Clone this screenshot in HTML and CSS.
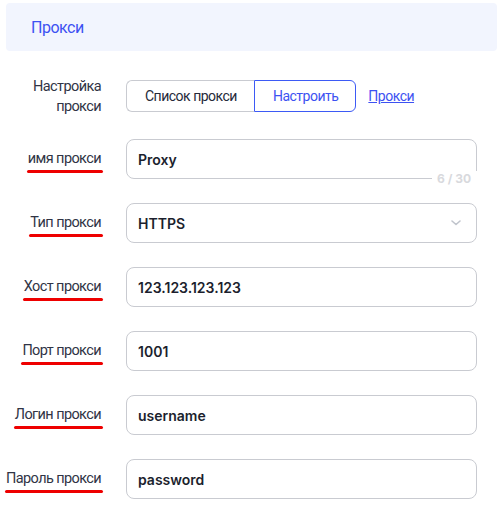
FILE: index.html
```html
<!DOCTYPE html>
<html>
    <head>
        <meta charset="utf-8">
        <title>Прокси</title>
        <link rel="stylesheet" href="styles.css">
    </head>
    <body>
        <div class="panel">
            <div class="header">Прокси</div>
            <div class="form">
                <div class="row">
                    <div class="label two-line">Настройка<br>прокси</div>
                    <div class="control">
                        <div class="seg">
                            <span class="seg-btn">Список прокси</span>
                            <span class="seg-btn active">Настроить</span>
                        </div>
                        <a class="link" href="#">Прокси</a>
                    </div>
                </div>
                <div class="row">
                    <div class="label"><span class="mark">имя прокси</span></div>
                    <div class="field">
                        Proxy
                        <span class="counter">6 / 30</span>
                    </div>
                </div>
                <div class="row">
                    <div class="label"><span class="mark">Тип прокси</span></div>
                    <div class="field select">
                        HTTPS
                        <svg class="chevron" width="10" height="6" viewBox="0 0 10 6">
                            <path d="M1 1 L5 4.5 L9 1" fill="none" stroke="#c0c4cc" stroke-width="1.6" stroke-linecap="round" stroke-linejoin="round"/>
                        </svg>
                    </div>
                </div>
                <div class="row">
                    <div class="label"><span class="mark">Хост прокси</span></div>
                    <div class="field">123.123.123.123</div>
                </div>
                <div class="row">
                    <div class="label"><span class="mark">Порт прокси</span></div>
                    <div class="field">1001</div>
                </div>
                <div class="row">
                    <div class="label"><span class="mark">Логин прокси</span></div>
                    <div class="field">username</div>
                </div>
                <div class="row">
                    <div class="label"><span class="mark">Пароль прокси</span></div>
                    <div class="field">password</div>
                </div>
            </div>
        </div>
    </body>
</html>
```

FILE: styles.css
```css
body {
    margin: 0;
    font-family: Roboto, "Liberation Sans", sans-serif;
    background: #ffffff;
}
.panel {
    padding: 3px 0 0 6px;
}
.header {
    height: 48px;
    display: flex;
    align-items: center;
    padding-left: 25px;
    background-color: #f2f5fe;
    border-radius: 4px;
    color: #3d52f2;
    font-size: 16px;
    letter-spacing: -0.5px;
}
.form {
    margin: 24px 20px 0 0;
    display: flex;
    flex-direction: column;
    gap: 24px;
}
.row {
    display: grid;
    grid-template-columns: 95px 1fr;
    column-gap: 25px;
    align-items: center;
    height: 40px;
}
.label {
    text-align: right;
    white-space: nowrap;
    font-size: 14.5px;
    letter-spacing: -0.6px;
    line-height: 20px;
    color: #303445;
}
.two-line {
    padding-top: 2px;
}
.mark {
    position: relative;
    display: inline-block;
}
.mark::after {
    content: "";
    position: absolute;
    left: -1px;
    right: -2px;
    bottom: -4px;
    height: 3px;
    border-radius: 2px;
    background-color: #ee0000;
}
.control {
    display: flex;
    align-items: center;
}
.seg {
    display: flex;
    height: 32px;
}
.seg-btn {
    display: flex;
    align-items: center;
    padding: 0 17px 0 18px;
    border: 1px solid #c9cbd1;
    font-size: 14px;
    letter-spacing: -0.5px;
    color: #262a3a;
}
.seg-btn:first-child {
    border-right: none;
    border-radius: 6px 0 0 6px;
}
.seg-btn.active {
    padding: 0 17px 0 18px;
    border-color: #3d5af5;
    color: #3d52f2;
    border-radius: 0 6px 6px 0;
}
.link {
    margin-left: 12px;
    font-size: 14px;
    letter-spacing: -0.5px;
    color: #3d52f2;
}
.field {
    position: relative;
    box-sizing: border-box;
    height: 40px;
    display: flex;
    align-items: center;
    padding: 0 11px;
    border: 1px solid #c9cbd1;
    border-radius: 8px;
    font-family: Inter, "Open Sans", sans-serif;
    font-weight: 600;
    font-size: 14px;
    color: #1c1f2e;
}
.counter {
    position: absolute;
    right: -1px;
    bottom: -9px;
    padding: 0 6px 0 5px;
    background-color: #ffffff;
    font-size: 12px;
    line-height: 16px;
    font-weight: 700;
    color: #d8d9dd;
}
.chevron {
    position: absolute;
    right: 15px;
    top: 16px;
}
```
